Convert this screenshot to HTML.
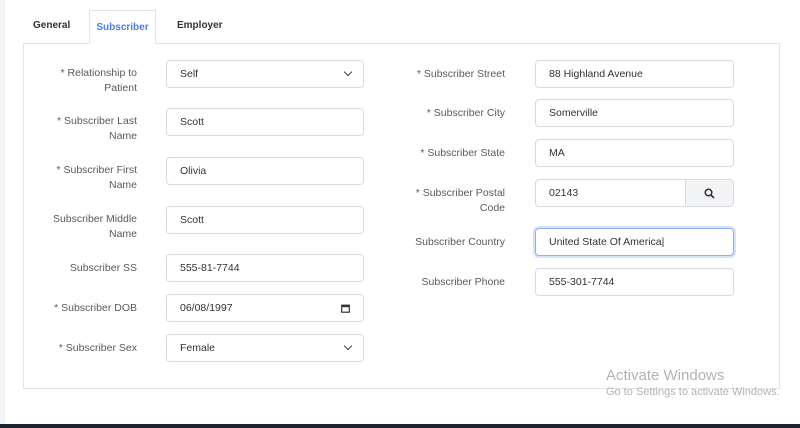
<!DOCTYPE html>
<html><head><style>
*{box-sizing:border-box;margin:0;padding:0}
body{width:800px;height:428px;background:#fff;position:relative;overflow:hidden;font-family:"Liberation Sans",sans-serif}
.strip{position:absolute;left:0;top:0;width:5px;height:428px;background:#f2f3f7}
.bar{position:absolute;left:0;top:424px;width:800px;height:4px;background:#1b2335}
.card{position:absolute;left:23px;top:43px;width:757px;height:346px;border:1px solid #e3e4e8}
.tab{position:absolute;top:20px;font-size:10px;font-weight:bold;color:#333}
.atab{position:absolute;left:89px;top:10px;width:67px;height:34px;background:#fff;border:1px solid #e3e4e8;border-bottom:none;color:#4a7cf0;font-size:10px;font-weight:bold;text-align:center;padding-top:11px}
.lbl{position:absolute;text-align:right;font-size:10.5px;color:#5a5a5a;line-height:15px;width:130px}
.inp{position:absolute;height:28px;border:1px solid #d8dae0;border-radius:4px;font-size:10.5px;color:#333;padding:7px 0 0 13px;background:#fff}
.L{left:166px;width:198px}
.R{left:535px;width:199px}
.ch{position:absolute;right:12px;top:8px;width:6px;height:6px;border-right:1.3px solid #444;border-bottom:1.3px solid #444;transform:rotate(45deg)}
.aw{position:absolute;left:606px;top:367px;color:#b3b3b3;font-size:15px}
.aw2{position:absolute;left:606px;top:386px;color:#b3b3b3;font-size:11px}
</style></head><body>
<div class="strip"></div>
<div class="card"></div>
<div class="tab" style="left:33px">General</div>
<div class="atab">Subscriber</div>
<div class="tab" style="left:177px">Employer</div>

<div class="lbl" style="left:7px;top:66px">* Relationship to<br>Patient</div>
<div class="inp L" style="top:60px">Self<span class="ch"></span></div>
<div class="lbl" style="left:7px;top:114px">* Subscriber Last<br>Name</div>
<div class="inp L" style="top:108px">Scott</div>
<div class="lbl" style="left:7px;top:163px">* Subscriber First<br>Name</div>
<div class="inp L" style="top:157px">Olivia</div>
<div class="lbl" style="left:7px;top:212px">Subscriber Middle<br>Name</div>
<div class="inp L" style="top:206px">Scott</div>
<div class="lbl" style="left:7px;top:261px">Subscriber SS</div>
<div class="inp L" style="top:254px">555-81-7744</div>
<div class="lbl" style="left:7px;top:301px">* Subscriber DOB</div>
<div class="inp L" style="top:294px">06/08/1997<svg style="position:absolute;right:13px;top:9px" width="9" height="9" viewBox="0 0 9 9"><rect x="0.7" y="1.2" width="7.6" height="7" fill="none" stroke="#333" stroke-width="1.2"/><rect x="0.7" y="1.2" width="7.6" height="2" fill="#333"/></svg></div>
<div class="lbl" style="left:7px;top:341px">* Subscriber Sex</div>
<div class="inp L" style="top:334px">Female<span class="ch"></span></div>

<div class="lbl" style="left:375px;top:67px">* Subscriber Street</div>
<div class="inp R" style="top:60px">88 Highland Avenue</div>
<div class="lbl" style="left:375px;top:106px">* Subscriber City</div>
<div class="inp R" style="top:99px">Somerville</div>
<div class="lbl" style="left:375px;top:146px">* Subscriber State</div>
<div class="inp R" style="top:139px">MA</div>
<div class="lbl" style="left:375px;top:186px">* Subscriber Postal<br>Code</div>
<div class="inp R" style="top:179px">02143<div style="position:absolute;right:0;top:0;width:48px;height:26px;background:#f3f4f6;border-left:1px solid #d8dae0;border-radius:0 4px 4px 0"><svg style="position:absolute;left:18px;top:8px" width="11" height="11" viewBox="0 0 11 11"><circle cx="4.5" cy="4.5" r="3.3" fill="none" stroke="#333" stroke-width="1.5"/><line x1="7" y1="7" x2="10" y2="10" stroke="#333" stroke-width="1.6"/></svg></div></div>
<div class="lbl" style="left:375px;top:235px">Subscriber Country</div>
<div class="inp R" style="top:228px;border-color:#8fb0f5;box-shadow:0 0 0 2px #d6e2fc">United State Of America|</div>
<div class="lbl" style="left:375px;top:275px">Subscriber Phone</div>
<div class="inp R" style="top:268px">555-301-7744</div>

<div class="aw">Activate Windows</div>
<div class="aw2">Go to Settings to activate Windows.</div>
<div class="bar"></div>
</body></html>
